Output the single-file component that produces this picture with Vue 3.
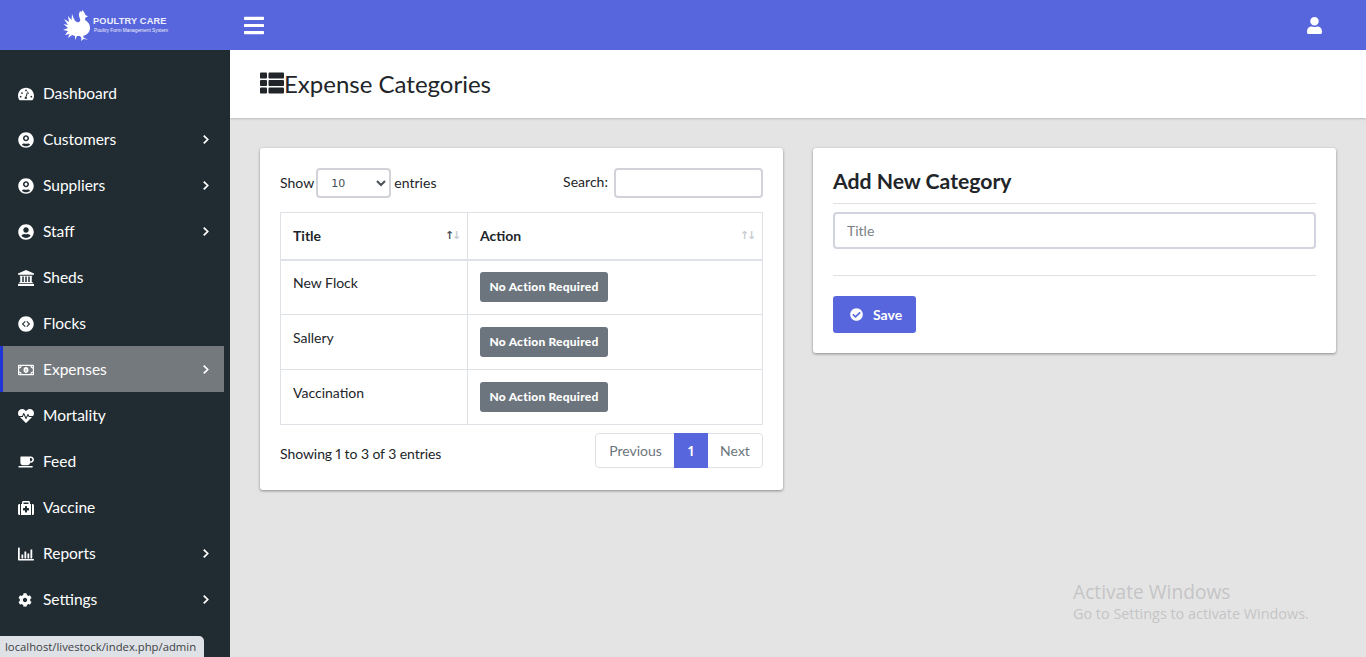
<script setup>
const icons = {
  gauge: { vb: '0 0 576 512', d: 'M288 32C129 32 0 161 0 320c0 53 14 102 39 145 6 10 17 15 28 15h442c11 0 22-5 28-15 25-43 39-92 39-145C576 161 447 32 288 32zm0 64c18 0 32 14 32 32s-14 32-32 32-32-14-32-32 14-32 32-32zM96 384c-18 0-32-14-32-32s14-32 32-32 32 14 32 32-14 32-32 32zm48-128c-18 0-32-14-32-32s14-32 32-32 32 14 32 32-14 32-32 32zm187 172h-86c-6-8-9-18-9-28 0-22 15-41 35-46l59-176c3-9 13-14 22-11 9 3 14 13 11 22l-59 176c13 9 21 23 21 35 0 10 0 20 6 28zm29-172c-18 0-32-14-32-32s14-32 32-32 32 14 32 32-14 32-32 32zm120 128c-18 0-32-14-32-32s14-32 32-32 32 14 32 32-14 32-32 32z' },
  userOutline: { vb: '0 0 496 512', d: 'M248 104c-53 0-96 43-96 96s43 96 96 96 96-43 96-96-43-96-96-96zm0 144c-26.500 0-48-21.500-48-48s21.500-48 48-48 48 21.500 48 48-21.500 48-48 48zm0-240C111 8 0 119 0 256s111 248 248 248 248-111 248-248S385 8 248 8zm0 448c-49.700 0-95.100-18.300-130.100-48.400 14.900-23 40.400-38.600 69.600-39.500 20.800 6.400 40.600 9.600 60.500 9.600s39.700-3.100 60.500-9.600c29.200 1 54.700 16.500 69.600 39.500-35 30.100-80.400 48.400-130.100 48.400z' },
  userCircle: { vb: '0 0 496 512', d: 'M248 8C111 8 0 119 0 256s111 248 248 248 248-111 248-248S385 8 248 8zm0 96c48.600 0 88 39.400 88 88s-39.400 88-88 88-88-39.400-88-88 39.400-88 88-88zm0 344c-58.700 0-111.300-26.600-146.500-68.200 18.800-35.400 55.600-59.800 98.500-59.800 2.400 0 4.800.4 7.100 1.100 13 4.200 26.600 6.900 40.900 6.900 14.300 0 28-2.700 40.900-6.900 2.300-.7 4.700-1.100 7.100-1.100 42.900 0 79.700 24.400 98.500 59.800C359.300 421.400 306.700 448 248 448z' },
  landmark: { vb: '0 0 512 512', d: 'M256 0 0 112v40h512v-40L256 0zM48 184v8c0 9 7 16 16 16h8v176H56c-9 0-16 7-16 16v16h432v-16c0-9-7-16-16-16h-16V208h8c9 0 16-7 16-16v-8H48zm88 24h48v176h-48V208zm96 0h48v176h-48V208zm96 0h48v176h-48V208zM24 440c-13 0-24 11-24 24v48h512v-48c0-13-11-24-24-24H24z' },
  flock: { vb: '0 0 512 512', d: 'M256 8C119 8 8 119 8 256s111 248 248 248 248-111 248-248S393 8 256 8zM220 160 124 256l96 96 24-24-72-72 72-72-24-24zm72 0-24 24 72 72-72 72 24 24 96-96-96-96z' },
  money: { vb: '0 0 640 512', d: 'M608 48H32C14 48 0 62 0 80v352c0 18 14 32 32 32h576c18 0 32-14 32-32V80c0-18-14-32-32-32zM48 416v-48c27 0 48 21 48 48H48zm0-272V96h48c0 27-21 48-48 48zm544 272h-48c0-27 21-48 48-48v48zm0-272c-27 0-48-21-48-48h48v48zM592 320c-53 0-96 43-96 96H144c0-53-43-96-96-96V192c53 0 96-43 96-96h352c0 53 43 96 96 96v128zM320 140c-58 0-100 52-100 116s42 116 100 116 100-52 100-116-42-116-100-116zm28 170h-56v-20h18v-50h-16l14-24h24v74h16v20z' },
  heart: { vb: '0 0 512 512', d: 'M320.200 243.800l-49.700 99.400c-6 12.100-23.400 11.700-28.900-.6l-56.900-126.300-30 71.700H60.600l182.500 186.500c7.100 7.300 18.600 7.300 25.700 0L451.400 288H342.300l-22.100-44.200zM473.700 73.900l-2.400-2.500c-51.500-52.600-135.800-52.600-187.400 0L256 100l-27.900-28.500c-51.500-52.700-135.900-52.700-187.400 0l-2.400 2.400C-10.400 123.700-12.500 203 31 256h102.400l35.900-86.200c5.400-12.900 23.600-13.200 29.400-.4l58.200 129.300 49-97.900c5.900-11.800 22.700-11.800 28.600 0l27.600 55.200H481c43.500-53 41.400-132.300-7.300-182.100z' },
  coffee: { vb: '0 0 640 512', d: 'M192 384h192c53 0 96-43 96-96h32c71 0 128-57 128-128S583 32 512 32H120c-13 0-24 11-24 24v232c0 53 43 96 96 96zM512 96c35 0 64 29 64 64s-29 64-64 64h-32V96h32zm48 384H48c-48 0-48-64 0-64h512c48 0 48 64 0 64z' },
  medkit: { vb: '0 0 512 512', d: 'M96 480h320V128h-32V80c0-26-22-48-48-48H176c-26 0-48 22-48 48v48H96v352zM176 80h160v48H176V80zM512 176v256c0 26-22 48-48 48h-16V128h16c26 0 48 22 48 48zM64 480H48c-26 0-48-22-48-48V176c0-26 22-48 48-48h16v352zM352 272v48c0 9-7 16-16 16h-48v48c0 9-7 16-16 16h-32c-9 0-16-7-16-16v-48h-48c-9 0-16-7-16-16v-48c0-9 7-16 16-16h48v-48c0-9 7-16 16-16h32c9 0 16 7 16 16v48h48c9 0 16 7 16 16z' },
  chart: { vb: '0 0 512 512', d: 'M496 416H56V64c0-9-7-16-16-16H16C7 48 0 55 0 64v368c0 18 14 32 32 32h464c9 0 16-7 16-16v-16c0-9-7-16-16-16zM157 272h-36c-6 0-11 5-11 11v106c0 6 5 11 11 11h36c6 0 11-5 11-11V283c0-6-5-11-11-11zm96-96h-36c-6 0-11 5-11 11v202c0 6 5 11 11 11h36c6 0 11-5 11-11V187c0-6-5-11-11-11zm96 64h-36c-6 0-11 5-11 11v138c0 6 5 11 11 11h36c6 0 11-5 11-11V251c0-6-5-11-11-11zm96-128h-36c-6 0-11 5-11 11v266c0 6 5 11 11 11h36c6 0 11-5 11-11V123c0-6-5-11-11-11z' },
  cog: { vb: '0 0 512 512', d: 'M487 316l-42-25c4-23 4-47 0-70l42-25c5-3 7-9 6-14-11-35-30-67-54-93-4-4-10-5-15-2l-43 24c-18-15-38-27-60-35V27c0-6-4-11-9-12-37-8-74-8-109 0-6 1-10 6-10 12v49c-22 8-42 20-60 35l-42-24c-5-3-11-2-15 2-25 26-43 58-54 93-2 5 1 11 5 14l42 25c-4 23-4 47 0 70l-42 25c-5 3-7 9-5 14 11 35 29 67 54 93 4 4 10 5 15 2l42-24c18 15 38 27 60 35v49c0 6 4 11 10 12 36 8 73 8 109 0 5-1 9-6 9-12v-49c22-8 42-20 60-35l43 24c5 3 11 2 15-2 24-26 43-58 54-93 1-5-1-11-6-14zM256 336c-44 0-80-36-80-80s36-80 80-80 80 36 80 80-36 80-80 80z' },
}

const menu = [
  { label: 'Dashboard', icon: 'gauge' },
  { label: 'Customers', icon: 'userOutline', arrow: true },
  { label: 'Suppliers', icon: 'userOutline', arrow: true },
  { label: 'Staff', icon: 'userCircle', arrow: true },
  { label: 'Sheds', icon: 'landmark' },
  { label: 'Flocks', icon: 'flock' },
  { label: 'Expenses', icon: 'money', arrow: true, active: true },
  { label: 'Mortality', icon: 'heart' },
  { label: 'Feed', icon: 'coffee' },
  { label: 'Vaccine', icon: 'medkit' },
  { label: 'Reports', icon: 'chart', arrow: true },
  { label: 'Settings', icon: 'cog', arrow: true },
]
const rows = ['New Flock', 'Sallery', 'Vaccination']
</script>

<template>
  <div class="app">
    <header class="topbar">
      <div class="brand">
        <svg class="rooster" viewBox="0 0 27 31" fill="#fff">
          <path d="M16 4 17 1l1.500 1 1-2L21 2l1.500 3L25 6.500 22.500 7.500 22 10c3 2 5 4 5 8s-3 7-7 8l1 2 4 1.500-4.500-.5L18 31l.5-3-1.500-2h-3l-2 4v-4l-3-1-4 3 1.500-4-4.500 1 3-4-5-1 5-2-4.500-4 4.500 1-4-6 5 3-1-6 3.500 4L9 4l2 5c2 4 5 4 6 2s-1.500-4-1-7z"/>
        </svg>
        <div class="brand-text">
          <div class="brand-name">POULTRY CARE</div>
          <div class="brand-tag">Poultry Form Management System</div>
        </div>
      </div>
      <svg class="burger" viewBox="0 0 448 512" fill="#fff"><path d="M16 132h416c8.837 0 16-7.163 16-16V76c0-8.837-7.163-16-16-16H16C7.163 60 0 67.163 0 76v40c0 8.837 7.163 16 16 16zm0 160h416c8.837 0 16-7.163 16-16v-40c0-8.837-7.163-16-16-16H16c-8.837 0-16 7.163-16 16v40c0 8.837 7.163 16 16 16zm0 160h416c8.837 0 16-7.163 16-16v-40c0-8.837-7.163-16-16-16H16c-8.837 0-16 7.163-16 16v40c0 8.837 7.163 16 16 16z"/></svg>
      <svg class="account" viewBox="0 0 448 512" fill="#fff"><path d="M224 256c70.700 0 128-57.300 128-128S294.700 0 224 0 96 57.300 96 128s57.300 128 128 128zm89.600 32h-16.700c-22.200 10.200-46.900 16-72.900 16s-50.600-5.800-72.900-16h-16.700C60.200 288 0 348.200 0 422.400V464c0 26.500 21.500 48 48 48h352c26.500 0 48-21.500 48-48v-41.600c0-74.200-60.200-134.400-134.400-134.400z"/></svg>
    </header>

    <div class="body">
      <aside class="sidebar">
        <nav class="menu">
          <a v-for="m in menu" :key="m.label" class="item" :class="{ active: m.active }">
            <span class="item-icon">
              <svg :viewBox="icons[m.icon].vb" fill="#fff" class="icon-svg" :class="'ic-' + m.icon"><path :d="icons[m.icon].d" fill-rule="evenodd"/></svg>
            </span>
            <span class="item-label">{{ m.label }}</span>
            <svg v-if="m.arrow" class="chev" viewBox="0 0 8 12"><path d="M2 1.500 6.500 6 2 10.500" fill="none" stroke="#fff" stroke-width="2"/></svg>
          </a>
        </nav>
      </aside>

      <main class="main">
        <div class="page-head">
          <svg class="head-icon" viewBox="0 0 512 512" fill="#212529"><path d="M149.333 216v80c0 13.255-10.745 24-24 24H24c-13.255 0-24-10.745-24-24v-80c0-13.255 10.745-24 24-24h101.333c13.255 0 24 10.745 24 24zM0 376v80c0 13.255 10.745 24 24 24h101.333c13.255 0 24-10.745 24-24v-80c0-13.255-10.745-24-24-24H24c-13.255 0-24 10.745-24 24zM125.333 32H24C10.745 32 0 42.745 0 56v80c0 13.255 10.745 24 24 24h101.333c13.255 0 24-10.745 24-24V56c0-13.255-10.745-24-24-24zm80 448H488c13.255 0 24-10.745 24-24v-80c0-13.255-10.745-24-24-24H205.333c-13.255 0-24 10.745-24 24v80c0 13.255 10.745 24 24 24zm-24-424v80c0 13.255 10.745 24 24 24H488c13.255 0 24-10.745 24-24V56c0-13.255-10.745-24-24-24H205.333c-13.255 0-24 10.745-24 24zm24 264H488c13.255 0 24-10.745 24-24v-80c0-13.255-10.745-24-24-24H205.333c-13.255 0-24 10.745-24 24v80c0 13.255 10.745 24 24 24z"/></svg>
          <h1 class="page-title">Expense Categories</h1>
        </div>

        <div class="content">
          <section class="card list-card">
            <div class="tools">
              <label class="length">Show
                <select class="select"><option>10</option></select>
                entries</label>
              <label class="search"><span class="search-text">Search:</span><input class="search-input" type="text" /></label>
            </div>
            <table class="table">
              <thead>
                <tr>
                  <th class="col-title">Title<span class="sort"><i class="dark">↑</i><i>↓</i></span></th>
                  <th>Action<span class="sort"><i>↑</i><i>↓</i></span></th>
                </tr>
              </thead>
              <tbody>
                <tr v-for="r in rows" :key="r">
                  <td>{{ r }}</td>
                  <td><span class="badge">No Action Required</span></td>
                </tr>
              </tbody>
            </table>
            <div class="table-foot">
              <span class="info">Showing 1 to 3 of 3 entries</span>
              <div class="pager">
                <a class="page prev">Previous</a>
                <a class="page current">1</a>
                <a class="page next">Next</a>
              </div>
            </div>
          </section>

          <section class="card form-card">
            <h2 class="form-title">Add New Category</h2>
            <hr class="rule" />
            <input class="title-input" type="text" placeholder="Title" />
            <hr class="rule second" />
            <button class="save" type="button">
              <svg class="save-icon" viewBox="0 0 512 512" fill="#fff"><path d="M504 256c0 136.967-111.033 248-248 248S8 392.967 8 256 119.033 8 256 8s248 111.033 248 248zM227.314 387.314l184-184c6.248-6.248 6.248-16.379 0-22.627l-22.627-22.627c-6.248-6.249-16.379-6.249-22.628 0L216 308.118l-70.059-70.059c-6.248-6.248-16.379-6.248-22.628 0l-22.627 22.627c-6.248 6.248-6.248 16.379 0 22.627l104 104c6.249 6.249 16.379 6.249 22.628.001z"/></svg>
              Save
            </button>
          </section>
        </div>
      </main>
    </div>

    <div class="status">localhost/livestock/index.php/admin</div>
    <div class="watermark">
      <div class="wm-1">Activate Windows</div>
      <div class="wm-2">Go to Settings to activate Windows.</div>
    </div>
  </div>
</template>

<style>
html, body { margin: 0; overflow: hidden; }
</style>

<style scoped>
* { box-sizing: border-box; }
.app {
  position: relative;
  height: 657px;
  overflow: hidden;
  font-family: Lato, "Liberation Sans", sans-serif;
  font-size: 14px;
  font-variant-numeric: proportional-nums;
  color: #212529;
  background: #e4e4e4;
  display: flex;
  flex-direction: column;
}
.topbar {
  height: 50px;
  flex: none;
  background: #5866dd;
  display: flex;
  align-items: center;
  padding-right: 44px;
}
.brand {
  width: 230px;
  flex: none;
  display: flex;
  align-items: center;
  padding-left: 63px;
  gap: 3px;
}
.rooster { width: 27px; height: 31px; flex: none; }
.brand-text { color: #fff; opacity: .9; }
.brand-name { font-size: 9.200px; font-weight: 700; line-height: 11px; font-family: "Liberation Sans", sans-serif; letter-spacing: .2px; white-space: nowrap; }
.brand-tag { font-size: 4.800px; line-height: 7px; white-space: nowrap; font-family: "Liberation Sans", sans-serif; padding-left: 1px; }
.burger { width: 20px; height: 23px; margin-left: 14px; }
.account { width: 15px; height: 17px; margin-left: auto; }

.body { flex: 1; display: flex; min-height: 0; }
.sidebar { width: 230px; flex: none; background: #212c32; padding: 20px 6px 0 0; }
.menu { display: flex; flex-direction: column; }
.item {
  height: 46px;
  display: flex;
  align-items: center;
  color: #fff;
  font-size: 15.500px;
  padding-left: 18px;
  padding-right: 15px;
}
.item.active { background: #74797d; border-left: 3px solid #1f35d8; padding-left: 15px; }
.item-icon { width: 16px; height: 16px; display: flex; align-items: center; justify-content: flex-start; flex: none; margin: 1px 9px 0 0; }
.icon-svg { width: 16px; height: 16px; display: block; flex: none; }
.ic-cog { width: 14px; height: 14px; }
.item-label { flex: 1; }
.chev { width: 7px; height: 11px; flex: none; margin-top: 1px; }

.main { flex: 1; min-width: 0; display: flex; flex-direction: column; }
.page-head {
  height: 68px;
  flex: none;
  background: #fff;
  display: flex;
  align-items: center;
  padding-left: 30px;
  box-shadow: 0 1px 2px rgba(0, 0, 0, .18);
}
.head-icon { width: 24px; height: 24px; flex: none; margin-top: -2px; }
.page-title { margin: 0; font-size: 24px; font-weight: 400; line-height: 30px; }

.content {
  flex: 1;
  display: grid;
  grid-template-columns: 523px 523px;
  gap: 30px;
  align-items: start;
  padding: 30px;
}
.card {
  background: #fff;
  border-radius: 3px;
  box-shadow: 0 1px 3px rgba(0, 0, 0, .4);
  padding: 20px;
}
.tools { display: flex; justify-content: space-between; align-items: center; height: 30px; margin-bottom: 14px; }
.length { display: flex; align-items: center; gap: 2px; line-height: 30px; letter-spacing: .03px; }
.select {
  width: 75px;
  height: 30px;
  margin-right: 1px;
  border: 2px solid #d1d3d8;
  border-radius: 4px;
  background: #fff;
  font-family: "DejaVu Sans", sans-serif;
  font-size: 11px;
  padding-left: 9px;
  color: #495057;
}
.search { display: flex; align-items: flex-start; gap: 6px; height: 30px; }
.search-text { line-height: 28px; letter-spacing: .03px; }
.search-input { width: 149px; height: 30px; border: 2px solid #d1d3d8; border-radius: 4px; }

.table { width: 483px; border-collapse: collapse; table-layout: fixed; border: 1px solid #dee2e6; }
.table th {
  position: relative;
  height: 47px;
  text-align: left;
  padding: 0 12px;
  font-weight: 700;
  font-size: 14px;
  border: 1px solid #dee2e6;
  border-bottom-width: 2px;
}
.col-title { width: 187px; }
.table td {
  height: 55px;
  vertical-align: top;
  padding: 13px 12px 0;
  border: 1px solid #dee2e6;
  line-height: 20px;
}
.table tbody tr:first-child td { padding-top: 12px; }
.sort { position: absolute; right: 8px; top: 15px; font-size: 11px; line-height: 16px; display: flex; font-family: "DejaVu Sans", sans-serif; }
.sort i { font-style: normal; color: #c8cbcf; width: 7px; text-align: center; }
.sort i.dark { color: #495057; }
.badge {
  display: inline-block;
  width: 128px;
  height: 30px;
  margin-top: -1px;
  background: #6c757d;
  color: #fff;
  border-radius: 3px;
  font-size: 12px;
  font-weight: 900;
  letter-spacing: .22px;
  line-height: 30px;
  text-align: center;
  white-space: nowrap;
}
.table-foot { display: flex; justify-content: space-between; margin-top: 8px; margin-bottom: 2px; height: 35px; }
.info { margin-top: 11px; line-height: 20px; letter-spacing: -.07px; }
.pager { display: flex; height: 35px; border: 1px solid #dee2e6; border-radius: 4px; }
.page { display: flex; align-items: center; justify-content: center; color: #6c757d; font-size: 14px; }
.page.prev { padding: 0 12px 0 13px; width: 78px; }
.page.next { padding: 0 12px; width: 54px; }
.page.current { background: #5866dd; color: #fff; font-weight: 700; width: 34px; margin: -1px 0; padding: 0; }

.form-title { margin: 0; font-size: 21.200px; font-weight: 700; line-height: 26px; height: 35px; padding-top: 0; color: #212529; }
.rule { border: 0; border-top: 1px solid #dee2e6; margin: 0; }
.title-input {
  display: block;
  width: 483px;
  height: 37px;
  margin-top: 8px;
  border: 2px solid #d1d3de;
  border-radius: 4px;
  padding: 0 12px;
  font-family: Lato, sans-serif;
  font-size: 14px;
}
.title-input::placeholder { color: #7b8087; }
.second { margin-top: 26px; }
.save {
  display: flex;
  align-items: center;
  width: 83px;
  height: 37px;
  margin-top: 20px;
  padding: 0 0 0 17px;
  border: 0;
  border-radius: 3px;
  background: #5866dd;
  color: #fff;
  font-family: Lato, sans-serif;
  font-weight: 700;
  font-size: 14px;
}
.save-icon { width: 13px; height: 13px; margin-right: 10px; }

.status {
  position: absolute;
  left: 0;
  bottom: 0;
  width: 204px;
  height: 21px;
  background: #dee1e6;
  border-top-right-radius: 5px;
  color: #3c4043;
  font-family: "Open Sans", sans-serif;
  font-size: 11.300px;
  line-height: 22px;
  padding-left: 5px;
  white-space: nowrap;
}
.watermark {
  position: absolute;
  left: 1073px;
  top: 579px;
  color: #c4c5c6;
  font-family: "Open Sans", sans-serif;
  white-space: nowrap;
}
.wm-1 { font-size: 19.200px; line-height: 25px; }
.wm-2 { font-size: 14.400px; line-height: 20px; }
</style>
